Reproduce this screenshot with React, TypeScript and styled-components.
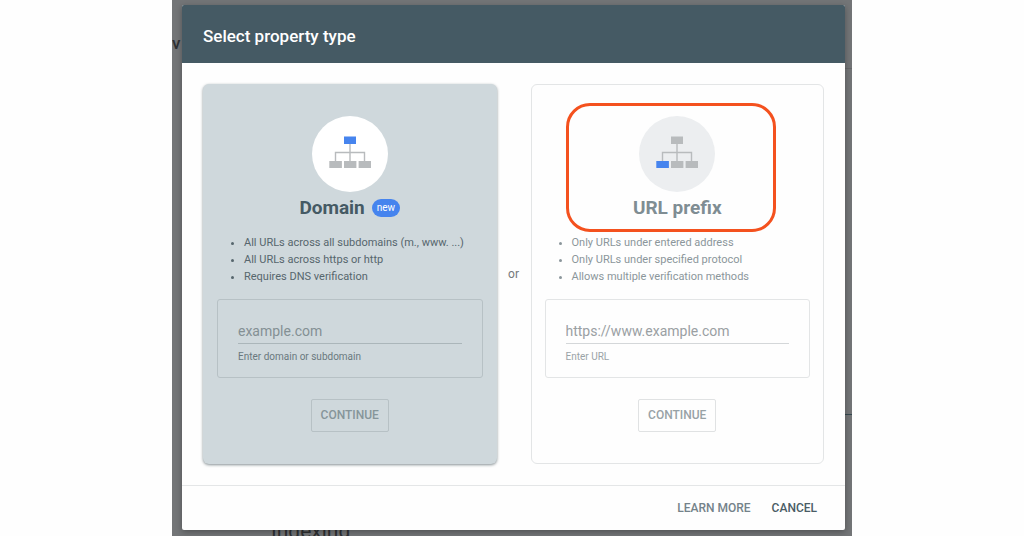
import React from "react";
import styled, { createGlobalStyle } from "styled-components";

const GlobalStyle = createGlobalStyle`
  *, *::before, *::after { box-sizing: border-box; }
  body {
    margin: 0;
    background: #fefefe;
    font-family: Roboto, "Liberation Sans", sans-serif;
  }
`;

const Stage = styled.div`
  position: relative;
  max-width: 680px;
  min-height: 100vh;
  margin: 0 auto;
  padding: 5px 7px 6px 10px;
  background: #737577;
  overflow: hidden;
`;

const PageBehind = styled.div`
  position: absolute;
  inset: 0;
  color: #2e3032;
`;

const PageMark = styled.span`
  position: absolute;
  top: 34px;
  left: 0;
  font-size: 17px;
  line-height: 19px;
  font-weight: 500;
`;

const PageHeading = styled.span`
  position: absolute;
  top: 520px;
  left: 99px;
  font-size: 21px;
  line-height: 22px;
`;

const PageRule = styled.span<{ $top: number; $color: string }>`
  position: absolute;
  top: ${(p) => p.$top}px;
  right: 0;
  width: 50%;
  height: 1px;
  background: ${(p) => p.$color};
`;

const Dialog = styled.section`
  position: relative;
  border-radius: 2px;
  background: #fefefe;
  box-shadow: 0 2px 6px rgba(0, 0, 0, 0.3);
`;

const DialogHeader = styled.header`
  padding: 22px 21px 18px;
  border-radius: 2px 2px 0 0;
  background: #455a64;
`;

const DialogTitle = styled.h1`
  margin: 0;
  color: #fff;
  font-size: 17px;
  line-height: 18px;
  font-weight: 500;
`;

const DialogBody = styled.div`
  display: grid;
  grid-template-columns: minmax(0, 1fr) 34px minmax(0, 1fr);
  padding: 21px;
`;

const Or = styled.span`
  align-self: center;
  color: #75797c;
  font-size: 12px;
  line-height: 16px;
  text-align: center;
`;

type Tone = { $selected?: boolean };

const Card = styled.form<Tone>`
  display: flex;
  flex-direction: column;
  align-items: center;
  padding: ${(p) => (p.$selected ? "32px 14px" : "31px 13px")};
  border: ${(p) => (p.$selected ? "none" : "1px solid #e3e5e6")};
  border-radius: 6px;
  background: ${(p) => (p.$selected ? "#cfd8dc" : "#fefefe")};
  box-shadow: ${(p) => (p.$selected ? "0 1px 3px rgba(55, 71, 79, 0.6)" : "none")};
`;

const CardHead = styled.div`
  position: relative;
  display: flex;
  flex-direction: column;
  align-items: center;
  gap: 4px;
  width: 100%;
`;

const Highlight = styled.span`
  position: absolute;
  top: -13px;
  left: calc(50% - 111px);
  width: 210px;
  height: 129px;
  border: 3px solid #f4511e;
  border-radius: 24px;
  pointer-events: none;
`;

const IconDisc = styled.div<Tone>`
  width: 76px;
  height: 76px;
  border-radius: 50%;
  background: ${(p) => (p.$selected ? "#fff" : "#eceef0")};
`;

const CardTitle = styled.h2<Tone>`
  display: flex;
  align-items: center;
  gap: 7px;
  margin: 0;
  color: ${(p) => (p.$selected ? "#455a64" : "#7f8d93")};
  font-size: 19px;
  line-height: 24px;
  font-weight: 700;
`;

const Badge = styled.span`
  padding: 0 5px;
  border-radius: 9px;
  background: #4684ee;
  color: #fff;
  font-size: 10px;
  line-height: 18px;
  font-weight: 400;
`;

const Features = styled.ul<Tone>`
  align-self: stretch;
  margin: 14px 0;
  padding-left: 27px;
  color: ${(p) => (p.$selected ? "#56666d" : "#8b969b")};
  font-size: 11px;
  line-height: 17px;
`;

const Field = styled.div<Tone>`
  display: flex;
  flex-direction: column;
  align-self: stretch;
  gap: 7px;
  padding: 20px 20px 14px;
  border: 1px solid ${(p) => (p.$selected ? "#b7c1c5" : "#e3e5e6")};
  border-radius: 3px;
`;

const TextInput = styled.input<Tone>`
  width: 100%;
  height: 24px;
  padding: 0 0 2px;
  border: 0;
  border-bottom: 1px solid ${(p) => (p.$selected ? "#abb6ba" : "#d4d7d9")};
  border-radius: 0;
  background: transparent;
  outline: none;
  color: #455a64;
  font: 14px Roboto, "Liberation Sans", sans-serif;

  &::placeholder {
    color: ${(p) => (p.$selected ? "#849094" : "#9aa0a3")};
    opacity: 1;
  }
`;

const Hint = styled.label<Tone>`
  color: ${(p) => (p.$selected ? "#6a787e" : "#9aa3a7")};
  font-size: 10px;
  line-height: 12px;
`;

const ContinueButton = styled.button<Tone>`
  margin-top: 21px;
  padding: 0 9px;
  border: 1px solid ${(p) => (p.$selected ? "#b7c1c5" : "#e0e2e3")};
  border-radius: 2px;
  background: transparent;
  color: ${(p) => (p.$selected ? "#86959a" : "#98a2a6")};
  font: 500 12px/31px Roboto, "Liberation Sans", sans-serif;
`;

const DialogFooter = styled.footer`
  display: flex;
  justify-content: flex-end;
  gap: 21px;
  padding: 14px 28px 14px 20px;
  border-top: 1px solid #e4e6e7;
`;

const FooterButton = styled.button<{ $strong?: boolean }>`
  padding: 0;
  border: 0;
  background: none;
  color: ${(p) => (p.$strong ? "#4a5c65" : "#74828a")};
  font: 500 12px/16px Roboto, "Liberation Sans", sans-serif;
`;

const BLUE = "#4684ee";
const GREY = "#b8bbbd";

function SiteTree({ highlight }: { highlight: "root" | "leaf" }) {
  return (
    <svg width="76" height="76" viewBox="0 0 76 76" aria-hidden="true">
      <path d="M38 27v18M23.5 45v-8.5h29V45" fill="none" stroke={GREY} strokeWidth="1.4" />
      <rect x="32" y="20.5" width="12" height="7.5" fill={highlight === "root" ? BLUE : GREY} />
      <rect x="17.3" y="45" width="12.6" height="7" fill={highlight === "leaf" ? BLUE : GREY} />
      <rect x="32" y="45" width="12.4" height="7" fill={GREY} />
      <rect x="46.6" y="45" width="12.4" height="7" fill={GREY} />
    </svg>
  );
}

type PropertyProps = {
  id: string;
  title: string;
  badge?: string;
  features: string[];
  placeholder: string;
  hint: string;
  selected?: boolean;
  highlighted?: boolean;
};

function PropertyCard(props: PropertyProps) {
  const { id, title, badge, features, placeholder, hint, selected, highlighted } = props;
  return (
    <Card $selected={selected} onSubmit={(e: React.FormEvent) => e.preventDefault()}>
      <CardHead>
        <IconDisc $selected={selected}>
          <SiteTree highlight={selected ? "root" : "leaf"} />
        </IconDisc>
        <CardTitle $selected={selected}>
          {title}
          {badge && <Badge>{badge}</Badge>}
        </CardTitle>
        {highlighted && <Highlight />}
      </CardHead>
      <Features $selected={selected}>
        {features.map((f) => (
          <li key={f}>{f}</li>
        ))}
      </Features>
      <Field $selected={selected}>
        <TextInput id={id} type="text" placeholder={placeholder} $selected={selected} />
        <Hint htmlFor={id} $selected={selected}>
          {hint}
        </Hint>
      </Field>
      <ContinueButton type="submit" $selected={selected}>
        CONTINUE
      </ContinueButton>
    </Card>
  );
}

export default function App() {
  return (
    <>
      <GlobalStyle />
      <Stage>
        <PageBehind aria-hidden="true">
          <PageMark>v</PageMark>
          <PageRule $top={68} $color="#66686a" />
          <PageRule $top={414} $color="#34484f" />
          <PageHeading>Indexing</PageHeading>
        </PageBehind>
        <Dialog role="dialog" aria-labelledby="dialog-title">
          <DialogHeader>
            <DialogTitle id="dialog-title">Select property type</DialogTitle>
          </DialogHeader>
          <DialogBody>
            <PropertyCard
              id="domain"
              title="Domain"
              badge="new"
              features={[
                "All URLs across all subdomains (m., www. ...)",
                "All URLs across https or http",
                "Requires DNS verification",
              ]}
              placeholder="example.com"
              hint="Enter domain or subdomain"
              selected
            />
            <Or>or</Or>
            <PropertyCard
              id="url-prefix"
              title="URL prefix"
              features={[
                "Only URLs under entered address",
                "Only URLs under specified protocol",
                "Allows multiple verification methods",
              ]}
              placeholder="https://www.example.com"
              hint="Enter URL"
              highlighted
            />
          </DialogBody>
          <DialogFooter>
            <FooterButton type="button">LEARN MORE</FooterButton>
            <FooterButton type="button" $strong>
              CANCEL
            </FooterButton>
          </DialogFooter>
        </Dialog>
      </Stage>
    </>
  );
}
